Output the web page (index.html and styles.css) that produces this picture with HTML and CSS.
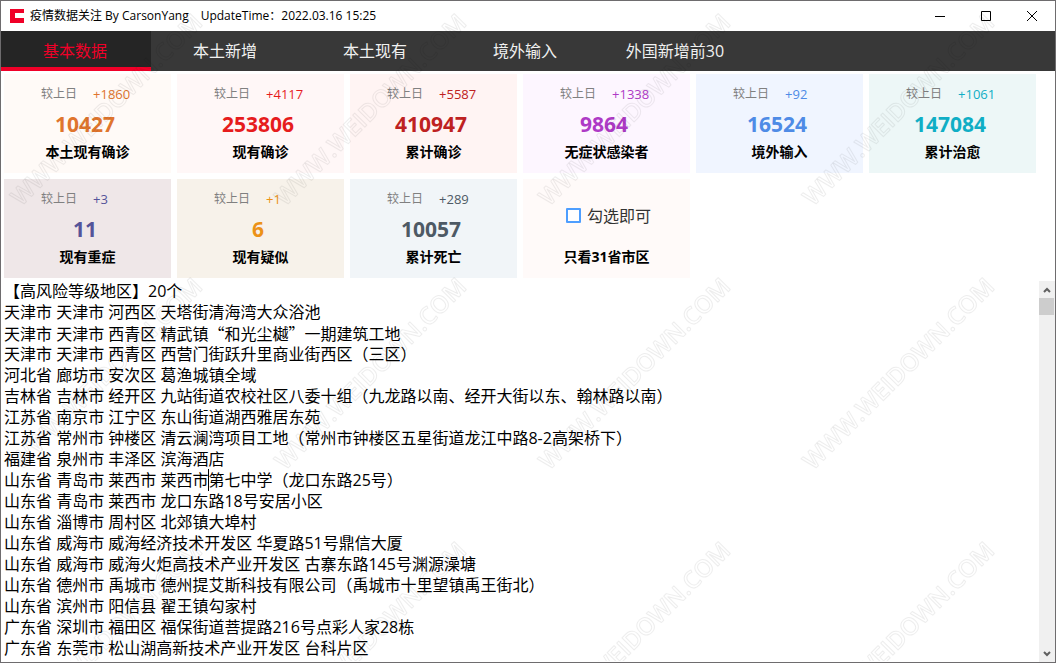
FILE: index.html
```html
<!DOCTYPE html>
<html lang="zh-CN">
<head>
<meta charset="utf-8">
<title>疫情数据关注</title>
<link rel="stylesheet" href="styles.css">
</head>
<body>
<div class="window">
  <header class="titlebar">
    <svg class="logo" viewBox="0 0 14 14" aria-hidden="true"><path fill="#f00028" d="M0 0h14v4H5v5h9v5H0z"/></svg>
    <h1 class="title"><span>疫情数据关注 By CarsonYang</span><span>UpdateTime：2022.03.16 15:25</span></h1>
    <div class="controls">
      <button class="control" aria-label="最小化"><svg viewBox="0 0 10 10"><path d="M0 5.5h10"/></svg></button>
      <button class="control" aria-label="最大化"><svg viewBox="0 0 10 10"><path d="M.5.5h9v9h-9z"/></svg></button>
      <button class="control" aria-label="关闭"><svg viewBox="0 0 10 10"><path d="M0 0l10 10M10 0L0 10"/></svg></button>
    </div>
  </header>
  <nav class="tabs">
    <button class="tab active">基本数据</button>
    <button class="tab">本土新增</button>
    <button class="tab">本土现有</button>
    <button class="tab">境外输入</button>
    <button class="tab">外国新增前30</button>
  </nav>
  <main class="content">
    <section class="cards">
      <article class="card local"><p class="delta">较上日<span class="change">+1860</span></p><p class="number">10427</p><h2 class="label">本土现有确诊</h2></article>
      <article class="card current"><p class="delta">较上日<span class="change">+4117</span></p><p class="number">253806</p><h2 class="label">现有确诊</h2></article>
      <article class="card total"><p class="delta">较上日<span class="change">+5587</span></p><p class="number">410947</p><h2 class="label">累计确诊</h2></article>
      <article class="card silent"><p class="delta">较上日<span class="change">+1338</span></p><p class="number">9864</p><h2 class="label">无症状感染者</h2></article>
      <article class="card imported"><p class="delta">较上日<span class="change">+92</span></p><p class="number">16524</p><h2 class="label">境外输入</h2></article>
      <article class="card cured"><p class="delta">较上日<span class="change">+1061</span></p><p class="number">147084</p><h2 class="label">累计治愈</h2></article>
      <article class="card severe"><p class="delta">较上日<span class="change">+3</span></p><p class="number">11</p><h2 class="label">现有重症</h2></article>
      <article class="card suspected"><p class="delta">较上日<span class="change">+1</span></p><p class="number">6</p><h2 class="label">现有疑似</h2></article>
      <article class="card dead"><p class="delta">较上日<span class="change">+289</span></p><p class="number">10057</p><h2 class="label">累计死亡</h2></article>
      <article class="card filter"><label class="option"><input class="check" type="checkbox">勾选即可</label><h2 class="label">只看31省市区</h2></article>
    </section>
    <section class="viewer">
      <div class="report" role="textbox" aria-multiline="true" aria-label="风险地区">
        <p>【高风险等级地区】20个</p>
        <p>天津市 天津市 河西区 天塔街清海湾大众浴池</p>
        <p>天津市 天津市 西青区 精武镇<span class="quote">“</span>和光尘樾<span class="quote">”</span>一期建筑工地</p>
        <p>天津市 天津市 西青区 西营门街跃升里商业街西区（三区）</p>
        <p>河北省 廊坊市 安次区 葛渔城镇全域</p>
        <p>吉林省 吉林市 经开区 九站街道农校社区八委十组（九龙路以南、经开大街以东、翰林路以南）</p>
        <p>江苏省 南京市 江宁区 东山街道湖西雅居东苑</p>
        <p>江苏省 常州市 钟楼区 清云澜湾项目工地（常州市钟楼区五星街道龙江中路8-2高架桥下）</p>
        <p>福建省 泉州市 丰泽区 滨海酒店</p>
        <p>山东省 青岛市 莱西市 莱西市<span class="caret"></span>第七中学（龙口东路25号）</p>
        <p>山东省 青岛市 莱西市 龙口东路18号安居小区</p>
        <p>山东省 淄博市 周村区 北郊镇大埠村</p>
        <p>山东省 威海市 威海经济技术开发区 华夏路51号鼎信大厦</p>
        <p>山东省 威海市 威海火炬高技术产业开发区 古寨东路145号渊源澡塘</p>
        <p>山东省 德州市 禹城市 德州提艾斯科技有限公司（禹城市十里望镇禹王街北）</p>
        <p>山东省 滨州市 阳信县 翟王镇勾家村</p>
        <p>广东省 深圳市 福田区 福保街道菩提路216号点彩人家28栋</p>
        <p>广东省 东莞市 松山湖高新技术产业开发区 台科片区</p>
      </div>
      <div class="scrollbar">
        <button class="arrow" aria-label="向上滚动"><svg viewBox="0 0 8 6"><path d="M1 5l3-3 3 3"/></svg></button>
        <div class="thumb"></div>
        <button class="arrow down" aria-label="向下滚动"><svg viewBox="0 0 8 6"><path d="M1 1l3 3 3-3"/></svg></button>
      </div>
    </section>
  </main>
  <svg class="watermark" aria-hidden="true">
    <defs>
      <pattern id="mark" width="264" height="264" patternUnits="userSpaceOnUse">
        <text class="mark-text" transform="translate(21 207) rotate(-45)">WWW.WEIDOWN.COM</text>
      </pattern>
    </defs>
    <rect width="100%" height="100%" fill="url(#mark)"/>
  </svg>
</div>
</body>
</html>
```

FILE: styles.css
```css
* {
  box-sizing: border-box;
}

body,
h1,
h2,
p {
  margin: 0;
}

body,
button {
  font-family: "Open Sans", "Noto Sans CJK SC", sans-serif;
}

button {
  padding: 0;
  border: 0;
  background: none;
}

.window {
  position: relative;
  display: flex;
  flex-direction: column;
  height: 100vh;
  border: 1px solid #6e6c6e;
  background: #fff;
  color: #000;
  overflow: hidden;
}

.titlebar {
  display: flex;
  flex: none;
  align-items: center;
  height: 30px;
  padding-left: 9px;
}

.logo {
  width: 14px;
  height: 14px;
}

.title {
  display: flex;
  flex: 1;
  gap: 12px;
  margin-left: 6px;
  font-size: 12px;
  font-weight: 400;
  line-height: 20px;
  white-space: nowrap;
}

.controls {
  display: flex;
}

.control {
  display: flex;
  align-items: center;
  justify-content: center;
  width: 46px;
  height: 28px;
}

.control svg {
  width: 10px;
  height: 10px;
  fill: none;
  stroke: #000;
  overflow: visible;
}

.tabs {
  display: flex;
  flex: none;
  height: 40px;
  background: #383838;
}

.tab {
  width: 150px;
  padding-right: 2px;
  border-top: 4px solid transparent;
  border-bottom: 4px solid transparent;
  color: #f0f0f0;
  font-size: 16px;
  line-height: 32px;
}

.tab.active {
  border-top-color: #252525;
  border-bottom-color: #f00028;
  background: #252525;
  color: #f00028;
}

.content {
  display: flex;
  flex: 1;
  flex-direction: column;
  min-height: 0;
}

.cards {
  display: grid;
  grid-template-columns: repeat(6, 1fr);
  gap: 6px;
  padding: 3px 19px 3px 3px;
}

.card {
  padding: 10px 0 13px;
}

.delta {
  display: flex;
  padding-left: 37px;
  color: #808080;
  font-size: 12px;
  line-height: 20px;
}

.change {
  margin-left: 16px;
  font-size: 13px;
}

.number {
  padding-right: 5px;
  font-size: 21px;
  font-weight: 700;
  line-height: 40px;
  text-align: center;
}

.label {
  font-size: 14px;
  font-weight: 700;
  line-height: 16px;
  text-align: center;
}

.change,
.number {
  color: var(--tone);
}

.local { --tone: #e0752d; background: #fffaf7; }
.current { --tone: #e61c1d; background: #fff7f7; }
.total { --tone: #be2121; background: #fff4f3; }
.silent { --tone: #ae3ac6; background: #fdf6ff; }
.imported { --tone: #4e8be6; background: #f0f5ff; }
.cured { --tone: #10aec5; background: #edf7f7; }
.severe { --tone: #545499; background: #efe7e8; }
.suspected { --tone: #ec9217; background: #f7f2ea; }
.dead { --tone: #4e5a65; background: #f1f5f8; }
.filter { background: #fffaf9; }

.option {
  display: flex;
  align-items: center;
  justify-content: center;
  gap: 6px;
  height: 60px;
  padding: 0 0 8px 4px;
  color: #333;
  font-size: 16px;
}

.check {
  width: 15px;
  height: 15px;
  margin: 0;
  appearance: none;
  border: 2px solid #4e9eff;
  border-radius: 1px;
  background: #fff;
}

.viewer {
  display: flex;
  flex: 1;
  min-height: 0;
}

.report {
  flex: 1;
  padding: 0 3px;
  overflow: hidden;
  font-size: 16px;
  line-height: 21px;
  white-space: nowrap;
}

.report p {
  height: 21px;
}

.quote {
  font-family: "Noto Sans CJK SC", sans-serif;
}

.caret {
  margin-right: -1px;
  border-left: 1px solid #000;
}

.scrollbar {
  display: flex;
  flex-direction: column;
  width: 16px;
  background: #f0f0f0;
}

.arrow {
  display: flex;
  align-items: center;
  justify-content: center;
  width: 15px;
  height: 17px;
}

.arrow.down {
  margin-top: auto;
}

.arrow svg {
  width: 8px;
  height: 6px;
  fill: none;
  stroke: #606060;
  stroke-width: 2;
}

.thumb {
  width: 15px;
  height: 17px;
  background: #cdcdcd;
}

.watermark {
  position: absolute;
  top: -1px;
  left: -1px;
  width: 100%;
  height: 100%;
  pointer-events: none;
}

.mark-text {
  fill: none;
  stroke: #000;
  stroke-linejoin: round;
  stroke-opacity: 0.07;
  stroke-width: 1;
  font-family: "Open Sans", sans-serif;
  font-size: 24px;
  font-weight: 600;
}
```
